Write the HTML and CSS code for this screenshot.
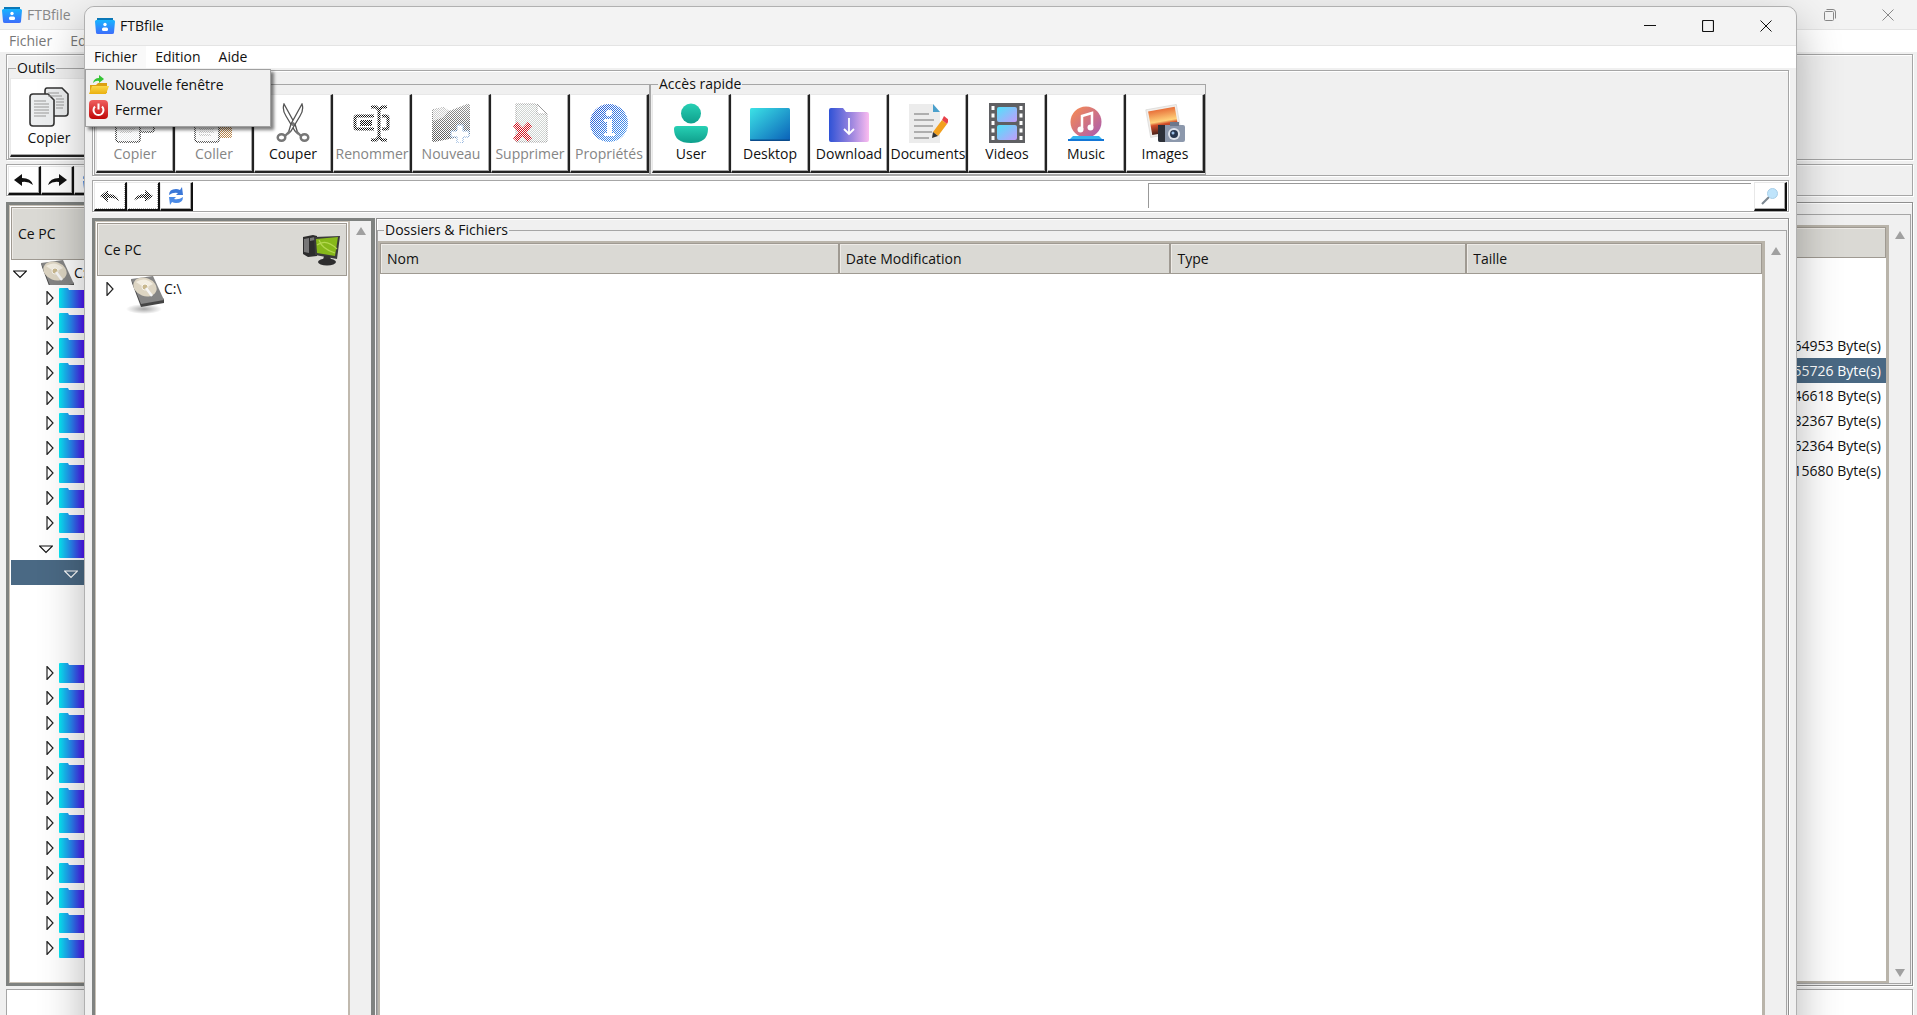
FILE: index.html
```html
<!DOCTYPE html>
<html lang="fr">
<head>
<meta charset="utf-8">
<title>FTBfile</title>
<link rel="stylesheet" href="styles.css">
</head>
<body>
<svg class="defs" aria-hidden="true">
  <defs>
    <linearGradient id="g-app" x1="0" y1="0" x2="0" y2="1"><stop offset="0" stop-color="#18b4ff"/><stop offset="1" stop-color="#3d6dfb"/></linearGradient>
    <linearGradient id="g-folder"><stop offset="0" stop-color="#06e8f2"/><stop offset=".5" stop-color="#2a80f0"/><stop offset="1" stop-color="#5206f0"/></linearGradient>
    <linearGradient id="g-user" x1="0" y1="0" x2="0" y2="1"><stop offset="0" stop-color="#27d0b4"/><stop offset="1" stop-color="#0f9f8c"/></linearGradient>
    <linearGradient id="g-desk" x1="0" y1="0" x2="1" y2="1"><stop offset="0" stop-color="#3ce3e6"/><stop offset="1" stop-color="#0a5fb8"/></linearGradient>
    <linearGradient id="g-down"><stop offset="0" stop-color="#2f52d6"/><stop offset=".6" stop-color="#a48ae0"/><stop offset="1" stop-color="#fbbcf0"/></linearGradient>
    <linearGradient id="g-video" x1="0" y1="0" x2="1" y2="1"><stop offset="0" stop-color="#4fe3fb"/><stop offset="1" stop-color="#c39bfa"/></linearGradient>
    <linearGradient id="g-music" x1="0" y1="0" x2="1" y2="1"><stop offset="0" stop-color="#fb8d4e"/><stop offset="1" stop-color="#a75ab5"/></linearGradient>
    <linearGradient id="g-sun" x1="0" y1="0" x2="0" y2="1"><stop offset="0" stop-color="#e8703a"/><stop offset=".5" stop-color="#ffd27a"/><stop offset=".62" stop-color="#d4502a"/><stop offset="1" stop-color="#4a2018"/></linearGradient>
    <linearGradient id="g-info" x1="0" y1="0" x2="1" y2="1"><stop offset="0" stop-color="#2456d0"/><stop offset="1" stop-color="#4fa0f4"/></linearGradient>
    <linearGradient id="g-new" x1="0" y1="0" x2="0" y2="1"><stop offset="0" stop-color="#999"/><stop offset="1" stop-color="#555"/></linearGradient>
    <linearGradient id="g-red" x1="0" y1="0" x2="0" y2="1"><stop offset="0" stop-color="#f06060"/><stop offset="1" stop-color="#c00808"/></linearGradient>
    <linearGradient id="g-yellow" x1="0" y1="0" x2="0" y2="1"><stop offset="0" stop-color="#fbd84a"/><stop offset="1" stop-color="#eab010"/></linearGradient>
    <radialGradient id="g-shade"><stop offset="0" stop-color="#000" stop-opacity=".35"/><stop offset="1" stop-color="#000" stop-opacity="0"/></radialGradient>
  </defs>
  <symbol id="i-app" viewBox="0 0 20 16">
    <path d="M2 0h16v3H2z" fill="#0a78b8"/><path d="M0 3.500Q0 2 1.500 2h17Q20 2 20 3.500L19 14.500Q19 16 17 16H3Q1 16 1 14.500z" fill="url(#g-app)"/>
    <circle cx="10" cy="6.500" r="1.700" fill="#fff"/><rect x="7" y="9.500" width="6" height="3.500" rx="1.500" fill="#fff"/>
  </symbol>
  <symbol id="i-copy" viewBox="0 0 40 40">
    <g fill="#eceeef" stroke="#333" stroke-width="1.600"><path d="M18 1h15l6 6v19q0 3-3 3H18q-2 0-2-3V4q0-3 2-3z"/><path d="M4 7h15l6 6v23q0 3-3 3H4q-3 0-3-3V10q0-3 3-3z"/></g>
    <path d="M19 6h11M19 9h14M27 12h8M27 15h8M27 18h8M27 21h7M5 14h12M5 17h15M5 20h15M5 23h15M5 26h15M5 29h12" stroke="#999" stroke-width="1.200" fill="none"/>
  </symbol>
  <symbol id="i-paste" viewBox="0 0 40 40">
    <rect x="14" y="3" width="24" height="32" rx="2" fill="#b9854a"/>
    <path d="M4 9h15l6 6v21q0 3-3 3H4q-3 0-3-3V12q0-3 3-3z" fill="#f2f2f2" stroke="#333" stroke-width="1.500"/>
    <path d="M5 17h12M5 20h15M5 23h15M5 26h15M5 29h15M5 32h12" stroke="#999" stroke-width="1.200"/>
  </symbol>
  <symbol id="i-cut" viewBox="0 0 40 40">
    <g fill="#fff" stroke="#555" stroke-width="1.300"><path d="M11 1q-2 6 2 12l9 15 3 3-3-10z"/><path d="M29 1q2 6-2 12l-9 15-3 3 3-10z"/><circle cx="20" cy="21" r="1.200"/></g>
    <g fill="none" stroke="#777" stroke-width="2.400"><ellipse cx="8.500" cy="34.500" rx="3.800" ry="3.300"/><ellipse cx="31.500" cy="34.500" rx="3.800" ry="3.300"/><path d="M12 33l5-5M28 33l-5-5"/></g>
  </symbol>
  <symbol id="i-rename" viewBox="0 0 40 40">
    <g fill="none" stroke="#111" stroke-width="3"><path d="M22 13H5q-2 0-2 2v9q0 2 2 2h17M30 13h4q2 0 2 2v9q0 2-2 2h-4"/><path d="M19 4h5l3 3v27l-3 3h-5M35 4h-5l-3 3M27 34l3 3h5"/></g>
    <path d="M8 17h12v6H8z" fill="#111"/>
  </symbol>
  <symbol id="i-new" viewBox="0 0 40 40">
    <path d="M1 8q0-2 2-2l10-2 5 4 18-7q3-1 3 2v29L3 39q-2 0-2-2z" fill="url(#g-new)"/><path d="M2 7l10-3 5 4-4 6-11 4z" fill="#ccc"/>
    <path d="M26 22h6v6h6v6h-6v6h-6v-6h-6v-6h6z" fill="#fff" stroke="#6a98d0"/>
  </symbol>
  <symbol id="i-delete" viewBox="0 0 40 40">
    <path d="M6 1h20l11 10v28H6z" fill="#cfd4d1" stroke="#999"/><path d="M27 1l10 10H27z" fill="#fff" stroke="#999"/>
    <path d="M5 21l15 16M20 21L5 37" stroke="#d0101c" stroke-width="6"/>
  </symbol>
  <symbol id="i-info" viewBox="0 0 40 40">
    <circle cx="20" cy="20" r="19" fill="url(#g-info)"/><circle cx="20" cy="10" r="3.200" fill="#fff"/><path d="M15 16h8v14h3v3H15v-3h3V19h-3z" fill="#fff"/>
  </symbol>
  <symbol id="i-user" viewBox="0 0 40 40">
    <circle cx="20" cy="10.500" r="10" fill="url(#g-user)"/><path d="M6 23h28q3 0 3 3 0 14-17 14T3 26q0-3 3-3z" fill="url(#g-user)"/>
  </symbol>
  <symbol id="i-desktop" viewBox="0 0 40 40"><rect y="5" width="40" height="33" rx="1.500" fill="url(#g-desk)"/><path d="M0 36.500h40v.5q0 1-1 1H1q-1 0-1-1z" fill="#0b4c8c"/></symbol>
  <symbol id="i-download" viewBox="0 0 40 40">
    <path d="M0 7q0-2 2-2h12l3 4h21q2 0 2 2v26q0 2-2 2H2q-2 0-2-2z" fill="url(#g-down)"/><path d="M20 15v16M15 26l5 5 5-5" stroke="#fff" stroke-width="1.800" fill="none"/>
  </symbol>
  <symbol id="i-documents" viewBox="0 0 40 40">
    <path d="M1 1h24l7 8v31H1z" fill="#ececec"/><path d="M25 1l7 8h-7z" fill="#4aa0cc"/>
    <path d="M6 11h15M6 17h20M6 23h19M6 29h18M6 35h15" stroke="#999" stroke-width="1.500"/>
    <path d="M34 17l5 4-9 12-5-4z" fill="#f2a01e"/><path d="M36 13l5 4-2 4-5-4z" fill="#e8424a"/><path d="M25 29l5 4-6 2z" fill="#333"/>
  </symbol>
  <symbol id="i-videos" viewBox="0 0 40 40">
    <rect x="2" width="36" height="40" fill="#5f6063"/><rect x="10" y="4" width="20" height="15" rx="2" fill="url(#g-video)"/><rect x="10" y="22" width="20" height="15" rx="2" fill="url(#g-video)"/>
    <path d="M6 3v36M34 3v36" stroke="#fff" stroke-width="3" stroke-dasharray="4 3.500"/>
  </symbol>
  <symbol id="i-music" viewBox="0 0 40 40">
    <circle cx="20" cy="19" r="15.500" fill="url(#g-music)"/><path d="M7 33h26l5 5H2z" fill="#35b4f0"/><path d="M2 36h36v2H2z" fill="#1376d6"/>
    <path d="M16 26V13l10-3v14" fill="none" stroke="#fff" stroke-width="2.500"/><circle cx="14.500" cy="26.500" r="3" fill="#fff"/><circle cx="24.500" cy="24.500" r="3" fill="#fff"/>
  </symbol>
  <symbol id="i-images" viewBox="0 0 40 40">
    <g transform="rotate(-10 18 18)"><rect x="3" y="4" width="31" height="28" fill="#f1eeea" stroke="#ccc" stroke-width=".5"/><rect x="5" y="6" width="27" height="24" fill="url(#g-sun)"/></g>
    <rect x="13" y="22" width="27" height="17" rx="2" fill="#8c98ac"/><path d="M13 22h7v17h-5q-2 0-2-2z" fill="#2c3038"/><path d="M25 19h9v4h-9z" fill="#6c788c"/>
    <circle cx="29" cy="31" r="6" fill="#dfe4ec"/><circle cx="29" cy="31" r="4" fill="#27364e"/><circle cx="28" cy="30" r="1.500" fill="#9cc0e8"/>
  </symbol>
  <symbol id="i-undo" viewBox="0 0 20 16"><path d="M0 8l8-6v4q9 0 11 7-5-4-11-3v4z" fill="#111"/></symbol>
  <symbol id="i-redo" viewBox="0 0 20 16"><path d="M20 8l-8-6v4q-9 0-11 7 5-4 11-3v4z" fill="#111"/></symbol>
  <symbol id="i-refresh" viewBox="0 0 18 18">
    <path d="M2 8q0-6 7-6 2 0 4 1l2-3 1 8H9l2-2Q6 5 2 8z" fill="#3b78d8"/><path d="M16 10q0 6-7 6-2 0-4-1l-2 3-1-8h7l-2 2q5 1 9-2z" fill="#4a8ae6"/>
  </symbol>
  <symbol id="i-search" viewBox="0 0 18 18"><path d="M1 17l7-7" stroke="#7c8790" stroke-width="2.200"/><circle cx="11.500" cy="6.500" r="5" fill="#bfe4fb" stroke="#a9cfe8"/></symbol>
  <symbol id="i-open" viewBox="0 0 20 20">
    <path d="M1 10h6l2-2h9v10H1z" fill="#dca012"/><path d="M3 11h17l-3 8H0z" fill="url(#g-yellow)"/><path d="M4 8q1-5 6-5V0l5 4-5 4V6Q7 5 4 8z" fill="#35c435"/>
  </symbol>
  <symbol id="i-power" viewBox="0 0 20 20">
    <rect x="0" y="0" width="19" height="19" rx="4" fill="url(#g-red)"/><path d="M6 6.500a5 5 0 1 0 7 0M9.500 3.500v6" fill="none" stroke="#fff" stroke-width="2"/>
  </symbol>
  <symbol id="i-pc" viewBox="0 0 38 32">
    <path d="M1 3l10-2 4 1v20l-9 1-5-3z" fill="#2c2c2c"/><path d="M2 5l5-1v15l-5-1zM8 4l5-1v3l-5 1z" fill="#777"/>
    <path d="M12 3l26-1-3 23-22-4z" fill="#3a3a3a"/><path d="M14 5l22-2-3 19-18-3z" fill="#86b81a"/><path d="M15 11q9-7 20 4M17 6q3 9 16 13" stroke="#b4d850" stroke-width="1.200" fill="none"/>
    <path d="M22 22h6l1 4h-8z" fill="#333"/><ellipse cx="25" cy="28" rx="9" ry="3.500" fill="#2d2d2d"/>
  </symbol>
  <symbol id="i-disk" viewBox="0 0 38 38">
    <ellipse cx="18" cy="33" rx="18" ry="5" fill="url(#g-shade)"/>
    <path d="M5 3L6 7l9 24 23-4v-4z" fill="#444"/><path d="M5 3L27 0l11 24-23 4z" fill="#858585"/>
    <ellipse cx="19" cy="11" rx="12" ry="9" transform="rotate(20 19 11)" fill="#ddd5c3"/><path d="M10 6q9-6 17 2l-8 4z" fill="#f3eee2"/>
    <circle cx="19" cy="11" r="3" fill="#c9b88e" stroke="#fff" stroke-width=".8"/><path d="M20 12l6 8" stroke="#f6f6f6" stroke-width="2.500"/>
  </symbol>
  <symbol id="i-folder" viewBox="0 0 26 20"><path d="M0 1q0-1 1-1h8l1 2h15q1 0 1 1v16q0 1-1 1H1q-1 0-1-1z" fill="url(#g-folder)"/></symbol>
  <symbol id="i-closed" viewBox="0 0 14 14"><path d="M4 .5l6 6.500-6 6.500z" fill="#fff" stroke="#222" stroke-width="1.200"/></symbol>
  <symbol id="i-opened" viewBox="0 0 14 14"><path d="M.5 5h13L7 11.500z" fill="none" stroke="currentColor" stroke-width="1.200"/></symbol>
  <symbol id="i-min" viewBox="0 0 12 12"><path d="M0 5.500h12" stroke="currentColor"/></symbol>
  <symbol id="i-max" viewBox="0 0 12 12"><rect x=".5" y=".5" width="11" height="11" rx="1" fill="none" stroke="currentColor" stroke-width="1.200"/></symbol>
  <symbol id="i-restore" viewBox="0 0 12 12"><g fill="none" stroke="currentColor"><rect x=".5" y="2.500" width="9" height="9" rx="1"/><path d="M2.500.5H9q2.500 0 2.500 2.500v6.500"/></g></symbol>
  <symbol id="i-close" viewBox="0 0 12 12"><path d="M.5.5l11 11M11.500.5l-11 11" stroke="currentColor"/></symbol>
</svg>

<main class="desktop">
  <section class="window window--back" aria-label="FTBfile, arrière-plan">
    <header class="titlebar">
      <svg class="app-icon"><use href="#i-app"/></svg><span class="title">FTBfile</span>
      <button class="control" aria-label="Restaurer"><svg><use href="#i-restore"/></svg></button>
      <button class="control" aria-label="Fermer la fenêtre"><svg><use href="#i-close"/></svg></button>
    </header>
    <nav class="menubar"><button>Fichier</button><button>Edition</button></nav>
    <div class="content">
      <div class="frame toolbar">
        <fieldset class="group"><legend>Outils</legend>
          <button class="tool"><span class="icon"><svg><use href="#i-copy"/></svg></span>Copier</button>
        </fieldset>
      </div>
      <div class="frame navbar">
        <button class="nav" aria-label="Précédent"><svg><use href="#i-undo"/></svg></button>
        <button class="nav" aria-label="Suivant"><svg><use href="#i-redo"/></svg></button>
        <button class="nav" aria-label="Actualiser"><svg><use href="#i-refresh"/></svg></button>
      </div>
      <div class="panes">
        <div class="tree-pane">
          <div class="tree">
            <div class="tree-head">Ce PC</div>
            <ul class="rows">
              <li class="row root"><svg class="arrow"><use href="#i-opened"/></svg><svg class="disk"><use href="#i-disk"/></svg>C:\</li>
              <li class="row"><svg class="arrow"><use href="#i-closed"/></svg><svg class="folder"><use href="#i-folder"/></svg></li>
              <li class="row"><svg class="arrow"><use href="#i-closed"/></svg><svg class="folder"><use href="#i-folder"/></svg></li>
              <li class="row"><svg class="arrow"><use href="#i-closed"/></svg><svg class="folder"><use href="#i-folder"/></svg></li>
              <li class="row"><svg class="arrow"><use href="#i-closed"/></svg><svg class="folder"><use href="#i-folder"/></svg></li>
              <li class="row"><svg class="arrow"><use href="#i-closed"/></svg><svg class="folder"><use href="#i-folder"/></svg></li>
              <li class="row"><svg class="arrow"><use href="#i-closed"/></svg><svg class="folder"><use href="#i-folder"/></svg></li>
              <li class="row"><svg class="arrow"><use href="#i-closed"/></svg><svg class="folder"><use href="#i-folder"/></svg></li>
              <li class="row"><svg class="arrow"><use href="#i-closed"/></svg><svg class="folder"><use href="#i-folder"/></svg></li>
              <li class="row"><svg class="arrow"><use href="#i-closed"/></svg><svg class="folder"><use href="#i-folder"/></svg></li>
              <li class="row"><svg class="arrow"><use href="#i-closed"/></svg><svg class="folder"><use href="#i-folder"/></svg></li>
              <li class="row opened"><svg class="arrow"><use href="#i-opened"/></svg><svg class="folder"><use href="#i-folder"/></svg></li>
              <li class="row child selected"><svg class="arrow"><use href="#i-opened"/></svg><svg class="folder"><use href="#i-folder"/></svg></li>
              <li class="row"></li>
              <li class="row"></li>
              <li class="row"></li>
              <li class="row"><svg class="arrow"><use href="#i-closed"/></svg><svg class="folder"><use href="#i-folder"/></svg></li>
              <li class="row"><svg class="arrow"><use href="#i-closed"/></svg><svg class="folder"><use href="#i-folder"/></svg></li>
              <li class="row"><svg class="arrow"><use href="#i-closed"/></svg><svg class="folder"><use href="#i-folder"/></svg></li>
              <li class="row"><svg class="arrow"><use href="#i-closed"/></svg><svg class="folder"><use href="#i-folder"/></svg></li>
              <li class="row"><svg class="arrow"><use href="#i-closed"/></svg><svg class="folder"><use href="#i-folder"/></svg></li>
              <li class="row"><svg class="arrow"><use href="#i-closed"/></svg><svg class="folder"><use href="#i-folder"/></svg></li>
              <li class="row"><svg class="arrow"><use href="#i-closed"/></svg><svg class="folder"><use href="#i-folder"/></svg></li>
              <li class="row"><svg class="arrow"><use href="#i-closed"/></svg><svg class="folder"><use href="#i-folder"/></svg></li>
              <li class="row"><svg class="arrow"><use href="#i-closed"/></svg><svg class="folder"><use href="#i-folder"/></svg></li>
              <li class="row"><svg class="arrow"><use href="#i-closed"/></svg><svg class="folder"><use href="#i-folder"/></svg></li>
              <li class="row"><svg class="arrow"><use href="#i-closed"/></svg><svg class="folder"><use href="#i-folder"/></svg></li>
              <li class="row"><svg class="arrow"><use href="#i-closed"/></svg><svg class="folder"><use href="#i-folder"/></svg></li>
            </ul>
          </div>
          <div class="scrollbar"><i class="up"></i><i class="down"></i></div>
        </div>
        <div class="frame files-pane">
          <fieldset class="files">
            <legend aria-label="Dossiers et fichiers">&nbsp;</legend>
            <div class="list">
              <table>
                <thead><tr><th></th></tr></thead>
                <tbody>
                  <tr><td></td></tr>
                  <tr><td></td></tr>
                  <tr><td></td></tr>
                  <tr><td>64953 Byte(s)</td></tr>
                  <tr class="selected"><td>55726 Byte(s)</td></tr>
                  <tr><td>46618 Byte(s)</td></tr>
                  <tr><td>82367 Byte(s)</td></tr>
                  <tr><td>62364 Byte(s)</td></tr>
                  <tr><td>15680 Byte(s)</td></tr>
                </tbody>
              </table>
            </div>
            <div class="scrollbar"><i class="up"></i><i class="down"></i></div>
          </fieldset>
        </div>
      </div>
      <div class="frame status"></div>
    </div>
  </section>

  <section class="window window--front" aria-label="FTBfile">
    <header class="titlebar">
      <svg class="app-icon"><use href="#i-app"/></svg><span class="title">FTBfile</span>
      <button class="control" aria-label="Réduire"><svg><use href="#i-min"/></svg></button>
      <button class="control" aria-label="Agrandir"><svg><use href="#i-max"/></svg></button>
      <button class="control" aria-label="Fermer la fenêtre"><svg><use href="#i-close"/></svg></button>
    </header>
    <nav class="menubar">
      <div class="menu-anchor">
        <button class="active" aria-expanded="true">Fichier</button>
        <div class="popup">
          <button><svg><use href="#i-open"/></svg>Nouvelle fenêtre</button>
          <button><svg><use href="#i-power"/></svg>Fermer</button>
        </div>
      </div>
      <button>Edition</button><button>Aide</button>
    </nav>
    <div class="content">
      <div class="frame toolbar">
        <fieldset class="group" aria-label="Outils"><legend>&nbsp;</legend>
          <button class="tool" disabled><span class="icon"><svg><use href="#i-copy"/></svg></span>Copier</button>
          <button class="tool" disabled><span class="icon"><svg><use href="#i-paste"/></svg></span>Coller</button>
          <button class="tool"><span class="icon"><svg><use href="#i-cut"/></svg></span>Couper</button>
          <button class="tool" disabled><span class="icon"><svg><use href="#i-rename"/></svg></span>Renommer</button>
          <button class="tool" disabled><span class="icon"><svg><use href="#i-new"/></svg></span>Nouveau</button>
          <button class="tool" disabled><span class="icon"><svg><use href="#i-delete"/></svg></span>Supprimer</button>
          <button class="tool" disabled><span class="icon"><svg><use href="#i-info"/></svg></span>Propriétés</button>
        </fieldset>
        <fieldset class="group"><legend>Accès rapide</legend>
          <button class="tool"><span class="icon"><svg><use href="#i-user"/></svg></span>User</button>
          <button class="tool"><span class="icon"><svg><use href="#i-desktop"/></svg></span>Desktop</button>
          <button class="tool"><span class="icon"><svg><use href="#i-download"/></svg></span>Download</button>
          <button class="tool"><span class="icon"><svg><use href="#i-documents"/></svg></span>Documents</button>
          <button class="tool"><span class="icon"><svg><use href="#i-videos"/></svg></span>Videos</button>
          <button class="tool"><span class="icon"><svg><use href="#i-music"/></svg></span>Music</button>
          <button class="tool"><span class="icon"><svg><use href="#i-images"/></svg></span>Images</button>
        </fieldset>
      </div>
      <div class="frame navbar navbar--white">
        <button class="nav" disabled aria-label="Précédent"><svg><use href="#i-undo"/></svg></button>
        <button class="nav" disabled aria-label="Suivant"><svg><use href="#i-redo"/></svg></button>
        <button class="nav" aria-label="Actualiser"><svg><use href="#i-refresh"/></svg></button>
        <input class="search" type="text" aria-label="Rechercher">
        <button class="nav" aria-label="Lancer la recherche"><svg><use href="#i-search"/></svg></button>
      </div>
      <div class="panes">
        <div class="tree-pane">
          <div class="tree">
            <div class="tree-head">Ce PC<svg class="pc"><use href="#i-pc"/></svg></div>
            <ul class="rows">
              <li class="row root closed"><svg class="arrow"><use href="#i-closed"/></svg><svg class="disk"><use href="#i-disk"/></svg>C:\</li>
            </ul>
          </div>
          <div class="scrollbar"><i class="up"></i><i class="down"></i></div>
        </div>
        <div class="frame files-pane">
          <fieldset class="files">
            <legend>Dossiers &amp; Fichiers</legend>
            <div class="list">
              <table>
                <thead><tr><th class="col-name">Nom</th><th class="col-date">Date Modification</th><th class="col-type">Type</th><th>Taille</th></tr></thead>
              </table>
            </div>
            <div class="scrollbar"><i class="up"></i><i class="down"></i></div>
          </fieldset>
        </div>
      </div>
    </div>
  </section>
</main>
</body>
</html>
```
FILE: styles.css
```css
* { box-sizing: border-box; }

body {
  margin: 0;
  overflow: hidden;
  font: 14px/20px "Open Sans", "Noto Sans", sans-serif;
  color: #111;
}

button, input { font: inherit; color: inherit; margin: 0; padding: 0; border: 0; background: none; }
svg { display: block; flex: none; }
.defs { position: absolute; width: 0; height: 0; }

.desktop { position: relative; height: 100vh; overflow: hidden; }

/* windows */
.window { position: absolute; display: flex; flex-direction: column; background: #f0f0f0; }
.window--back { inset: 0 0 -40px 0; }
.window--front {
  inset: 6px 120px -60px 84px;
  border: 1px solid #b0b0b0;
  border-radius: 10px;
  box-shadow: 0 18px 45px rgba(0, 0, 0, .3);
}

.titlebar { display: flex; align-items: center; height: 38px; padding: 0 1px 0 10px; background: #f3f3f3; border-radius: 10px 10px 0 0; }
.window--back .titlebar { height: 29px; padding: 0 0 0 2px; color: #888; border-radius: 0; }
.app-icon { width: 20px; height: 16px; margin-right: 5px; }
.title { flex: 1; }
.control { display: flex; align-items: center; justify-content: center; width: 58px; height: 100%; }
.control svg { width: 12px; height: 12px; }

.menubar { display: flex; height: 23px; background: #fff; border-top: 1px solid #e4e4e4; }
.menubar > button, .menu-anchor > button { padding: 0 9px; height: 22px; }
.window--back .menubar { color: #777; }
.menu-anchor { position: relative; }
.menubar .active { background: #f9f9f9; }
.popup {
  position: absolute;
  z-index: 2;
  top: 23px;
  left: 0;
  width: 186px;
  padding: 2px 3px 4px;
  background: #f0f0f0;
  border: 1px solid #a0a0a0;
  box-shadow: 3px 3px 3px rgba(0, 0, 0, .5);
}
.popup button { display: flex; align-items: center; gap: 6px; width: 100%; height: 25px; }
.popup svg { width: 20px; height: 20px; }

.content { flex: 1; display: flex; flex-direction: column; min-height: 0; padding: 2px 7px 0; }
.window--back .content { padding: 2px 4px 0 6px; }
.frame { border: 1px solid #a6a6a6; box-shadow: inset 1px 1px #fff, 1px 1px #fff; }

/* toolbar */
.toolbar { display: flex; height: 106px; padding: 3px 0 0 1px; }
fieldset { min-width: 0; margin: 0; padding: 0; border: 1px solid #a6a6a6; }
legend { margin-left: 6px; padding: 0 1px; line-height: 20px; }
.group { display: flex; height: 101px; padding-left: 1px; }
.tool {
  display: flex;
  flex-direction: column;
  align-items: center;
  width: 79px;
  height: 79px;
  padding-top: 8px;
  background: #fff;
  border: 1px solid #e8e8e8;
  border-right: 2px solid #222;
  border-bottom: 2px solid #222;
  box-shadow: inset -1px -1px #aaa;
  white-space: nowrap;
}
.icon { position: relative; margin-bottom: 1px; }
.icon svg { width: 40px; height: 40px; overflow: visible; }
.tool:disabled { color: #858585; }
.tool:disabled .icon::after, .nav:disabled::after {
  content: "";
  position: absolute;
  inset: 0;
  background: repeating-conic-gradient(#fff 0 25%, transparent 0 50%) 0 0 / 2px 2px;
}

/* navigation bar */
.navbar { display: flex; height: 32px; margin-top: 4px; padding: 1px; }
.navbar--white { background: #fff; }
.nav {
  position: relative;
  display: flex;
  align-items: center;
  justify-content: center;
  width: 33px;
  height: 29px;
  background: #fff;
  border: 1px solid #e8e8e8;
  border-right: 2px solid #111;
  border-bottom: 2px solid #111;
  box-shadow: inset -1px -1px #aaa;
}
.nav svg { width: 20px; height: 18px; }
.search { width: 603px; height: 25px; margin: 1px 3px 0 auto; border-top: 1px solid #999; border-left: 1px solid #999; }

/* panes */
.panes { flex: 1; display: flex; gap: 1px; min-height: 0; margin-top: 6px; }
.tree-pane { display: flex; width: 283px; border: 3px solid #7f8280; border-right-width: 4px; }
.tree { flex: 1; padding: 1px; background: #fff; border: 1px solid #c8c1b6; border-right: 2px solid #c0b9ae; }
.tree-head {
  display: flex;
  align-items: center;
  justify-content: space-between;
  height: 53px;
  padding: 0 6px;
  background: #dad9d4;
  border: 1px solid #9f9a92;
  box-shadow: inset 1px 1px #eeebe7;
}
.pc { width: 38px; height: 32px; }
.rows { margin: 0; padding: 0; list-style: none; }
.row { display: flex; align-items: center; height: 25px; padding-left: 32px; }
.arrow { width: 14px; height: 14px; margin-right: 2px; }
.folder { width: 26px; height: 20px; }
.row.root { padding-left: 2px; overflow: hidden; }
.row.root .disk { align-self: flex-start; width: 38px; height: 38px; margin: 0 0 0 7px; }
.row.root.closed { padding-left: 6px; overflow: visible; }
.row.opened { padding-left: 28px; }
.row.opened .arrow { margin-right: 6px; }
.row.child { padding-left: 53px; }
.row.child .arrow { margin-right: 6px; }
.selected { background: #4a6984; color: #fff; }

.scrollbar { display: flex; flex-direction: column; justify-content: space-between; align-items: center; width: 21px; padding: 6px 0; background: #f0f0f0; }
.up, .down { border: 5px solid transparent; }
.up { border-bottom: 8px solid #a0a0a0; border-top: 0; }
.down { border-top: 8px solid #a0a0a0; border-bottom: 0; }

.files-pane { flex: 1; min-width: 0; display: flex; padding: 1px 1px 1px 0; border-color: #8f8f8f; }
.files { flex: 1; display: flex; padding-top: 1px; }
.list { flex: 1; background: #fff; border: 2px solid #b9b4aa; border-right-width: 3px; }
table { width: 100%; table-layout: fixed; border-collapse: separate; border-spacing: 0; }
th { height: 31px; padding: 0 6px; text-align: left; font-weight: 400; background: #dad9d4; border: 1px solid #9f9a92; box-shadow: inset 1px 1px #eeebe7; }
td { height: 25px; padding: 0 5px; text-align: right; }
.col-name { width: 33.2%; }
.col-date { width: 24%; }
.col-type { width: 21.4%; }

.status { height: 66px; margin-top: 3px; background: #fff; }
```
